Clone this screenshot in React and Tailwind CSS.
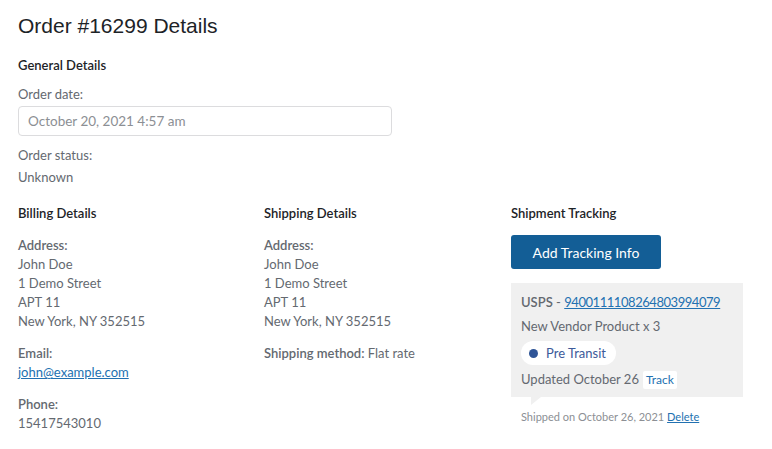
import React from "react";

const font = { fontFamily: 'Lato, "Noto Sans", sans-serif' };

const AddressBlock = ({ lines }) => (
  <div>
    <p className="font-semibold">Address:</p>
    {lines.map((line) => (
      <p key={line}>{line}</p>
    ))}
  </div>
);

const App = () => {
  const address = ["John Doe", "1 Demo Street", "APT 11", "New York, NY 352515"];

  return (
    <div className="min-h-screen bg-white pl-[18px] pt-[12px] text-[13px] leading-[19px] text-[#646970]" style={font}>
      <h1 className="text-[21px] leading-[28px] text-[#1d2327] font-['Liberation_Sans',Arial,sans-serif]">
        Order #16299 Details
      </h1>

      {/* General */}
      <h3 className="mt-[16px] font-semibold text-[#1d2327]">General Details</h3>
      <p className="mt-[10px]">Order date:</p>
      <div className="mt-[2px] flex h-[30px] w-[374px] items-center rounded-[4px] border border-[#dcdcde] px-[9px] text-[13.5px] text-[#8c8f94]">
        October 20, 2021 4:57 am
      </div>
      <p className="mt-[10px]">Order status:</p>
      <p className="mt-[3px]">Unknown</p>

      {/* Columns */}
      <div className="mt-[17px] grid grid-cols-[246px_247px_232px]">
        <div>
          <h3 className="font-semibold text-[#1d2327]">Billing Details</h3>
          <div className="mt-[13px]">
            <AddressBlock lines={address} />
          </div>
          <div className="mt-[13px]">
            <p className="font-semibold">Email:</p>
            <a href="#" className="text-[#2271b1] underline">john@example.com</a>
          </div>
          <div className="mt-[13px]">
            <p className="font-semibold">Phone:</p>
            <p>15417543010</p>
          </div>
        </div>

        <div>
          <h3 className="font-semibold text-[#1d2327]">Shipping Details</h3>
          <div className="mt-[13px]">
            <AddressBlock lines={address} />
          </div>
          <p className="mt-[13px]">
            <span className="font-semibold">Shipping method:</span> Flat rate
          </p>
        </div>

        <div>
          <h3 className="font-semibold text-[#1d2327]">Shipment Tracking</h3>
          <button className="mt-[12px] flex h-[34px] w-[150px] items-center justify-center rounded-[3px] bg-[#135e96] text-[14px] text-white">
            Add Tracking Info
          </button>

          <div className="relative mt-[14px] bg-[#f0f0f0] px-[10px] pt-[10px] pb-[8px]">
            <p>
              <span className="font-semibold">USPS</span> -{" "}
              <a href="#" className="tracking-[-0.45px] text-[#2271b1] underline">9400111108264803994079</a>
            </p>
            <p className="mt-[5px]">New Vendor Product x 3</p>
            <div className="mt-[5px] flex">
              <span className="flex h-[24px] items-center gap-[8px] rounded-full bg-white pl-[8px] pr-[10px] text-[#3c5a9a]">
                <span className="h-[9px] w-[9px] rounded-full bg-[#2f5597]" />
                Pre Transit
              </span>
            </div>
            <p className="mt-[5px] flex items-center gap-[4px]">
              Updated October 26
              <span className="rounded-[2px] bg-white px-[3px] text-[12px] leading-[18px] text-[#2271b1]">Track</span>
            </p>
            <span className="absolute left-[20px] top-full h-0 w-0 border-l-0 border-r-[10px] border-t-[8px] border-r-transparent border-t-[#f0f0f0]" />
          </div>

          <p className="mt-[12px] pl-[10px] text-[11px] leading-[16px] text-[#8c8f94]">
            Shipped on October 26, 2021{" "}
            <a href="#" className="text-[#2271b1] underline">Delete</a>
          </p>
        </div>
      </div>
    </div>
  );
};

export default App;
